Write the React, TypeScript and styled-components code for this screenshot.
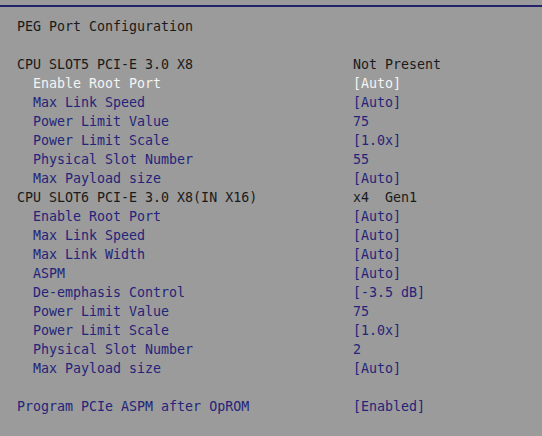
import * as React from 'react';
import styled, {createGlobalStyle} from 'styled-components';

type Tone = 'black' | 'white' | 'blue';

interface IRow {
  label: string;
  value?: string;
  indent?: boolean;
  tone: Tone;
}

const ROWS: (IRow | null)[] = [
  {label: 'PEG Port Configuration', tone: 'black'},
  null,
  {label: 'CPU SLOT5 PCI-E 3.0 X8', value: 'Not Present', tone: 'black'},
  {label: 'Enable Root Port', value: '[Auto]', indent: true, tone: 'white'},
  {label: 'Max Link Speed', value: '[Auto]', indent: true, tone: 'blue'},
  {label: 'Power Limit Value', value: '75', indent: true, tone: 'blue'},
  {label: 'Power Limit Scale', value: '[1.0x]', indent: true, tone: 'blue'},
  {label: 'Physical Slot Number', value: '55', indent: true, tone: 'blue'},
  {label: 'Max Payload size', value: '[Auto]', indent: true, tone: 'blue'},
  {label: 'CPU SLOT6 PCI-E 3.0 X8(IN X16)', value: 'x4  Gen1', tone: 'black'},
  {label: 'Enable Root Port', value: '[Auto]', indent: true, tone: 'blue'},
  {label: 'Max Link Speed', value: '[Auto]', indent: true, tone: 'blue'},
  {label: 'Max Link Width', value: '[Auto]', indent: true, tone: 'blue'},
  {label: 'ASPM', value: '[Auto]', indent: true, tone: 'blue'},
  {label: 'De-emphasis Control', value: '[-3.5 dB]', indent: true, tone: 'blue'},
  {label: 'Power Limit Value', value: '75', indent: true, tone: 'blue'},
  {label: 'Power Limit Scale', value: '[1.0x]', indent: true, tone: 'blue'},
  {label: 'Physical Slot Number', value: '2', indent: true, tone: 'blue'},
  {label: 'Max Payload size', value: '[Auto]', indent: true, tone: 'blue'},
  null,
  {label: 'Program PCIe ASPM after OpROM', value: '[Enabled]', tone: 'blue'},
];

const COLORS: Record<Tone, string> = {
  black: '#1a1a1a',
  white: '#f4f4f4',
  blue: '#24247a',
};

const App = () => {
  return (
    <>
      <GlobalStyle />
      <Screen>
        <TopRule />
        <List>
          {ROWS.map((row, i) =>
            row ? (
              <Row key={i}>
                <Label $indent={!!row.indent} $tone={row.tone}>
                  {row.label}
                </Label>
                {row.value && <Value $tone={row.tone}>{row.value}</Value>}
              </Row>
            ) : (
              <Row key={i} />
            )
          )}
        </List>
      </Screen>
    </>
  );
};

const GlobalStyle = createGlobalStyle`
  html, body {
    margin: 0;
    padding: 0;
    background: #9b9b9b;
  }
`;

const Screen = styled.div`
  width: 542px;
  height: 436px;
  overflow: hidden;
  background: #9b9b9b;
  font-family: 'DejaVu Sans Mono', 'Liberation Mono', monospace;
  font-size: 13.3px;
`;

const TopRule = styled.div`
  height: 2px;
  margin-top: 5px;
  background: #22226a;
`;

const List = styled.div`
  padding: 10px 0 0 17px;
`;

const Row = styled.div`
  display: grid;
  grid-template-columns: 336px 1fr;
  height: 19px;
  line-height: 19px;
  white-space: pre;
`;

const Label = styled.span<{$indent: boolean; $tone: Tone}>`
  padding-left: ${p => (p.$indent ? '16px' : '0')};
  color: ${p => COLORS[p.$tone]};
`;

const Value = styled.span<{$tone: Tone}>`
  color: ${p => COLORS[p.$tone]};
`;

export default App;
